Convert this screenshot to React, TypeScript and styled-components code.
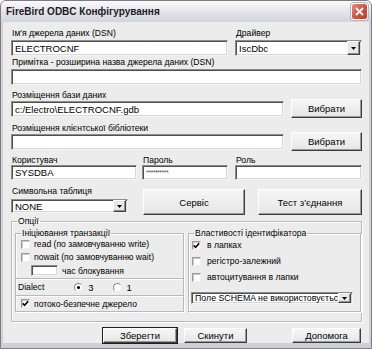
import styled, { createGlobalStyle } from "styled-components";

const GlobalStyle = createGlobalStyle`
  html, body {
    margin: 0;
    padding: 0;
    background: #ffffff;
  }
  body {
    font-family: "Liberation Sans", Arial, sans-serif;
    font-size: 8.6px;
    color: #000;
  }
  * {
    box-sizing: border-box;
  }
`;

const Window = styled.div`
  width: 372px;
  height: 349px;
  display: flex;
  flex-direction: column;
  background: #cfcfd6;
  border: 1px solid #7d7d86;
  border-radius: 6px 6px 0 0;
  padding: 0 2px 5px 2px;
  overflow: hidden;
`;

const TitleBar = styled.div`
  height: 21px;
  flex: none;
  display: flex;
  align-items: center;
  justify-content: space-between;
  margin: 0 -2px;
  padding: 0 3px 0 5px;
  background: linear-gradient(#fbfbfd, #e6e6ec 45%, #d3d3db);
`;

const Title = styled.span`
  font-family: "Liberation Sans", Arial, sans-serif;
  font-weight: bold;
  font-size: 10px;
  color: #1c1c24;
`;

const CloseButton = styled.div`
  width: 17px;
  height: 17px;
  border-radius: 3px;
  border: 1px solid #ffffff;
  background: linear-gradient(135deg, #ec8a78, #d8533f 50%, #c43a28);
  box-shadow: 0 0 0 1px #b8b8c0;
  display: flex;
  align-items: center;
  justify-content: center;
`;

const Body = styled.div`
  flex: 1;
  background: #ececec;
  padding: 6px 7px 0 8px;
  display: flex;
  flex-direction: column;
`;

const Row = styled.div<{ $gap?: number; $mt?: number; $align?: string }>`
  display: flex;
  gap: ${(p) => p.$gap ?? 7}px;
  margin-top: ${(p) => p.$mt ?? 0}px;
  align-items: ${(p) => p.$align ?? "flex-start"};
`;

const Field = styled.div<{ $w: number; $gap?: number }>`
  width: ${(p) => p.$w}px;
  display: flex;
  flex-direction: column;
  gap: ${(p) => p.$gap ?? 2}px;
`;

const Label = styled.div`
  height: 10px;
  line-height: 10px;
  white-space: nowrap;
  padding-left: 1px;
`;

const TextBox = styled.div<{ $h?: number; $w?: number; $fs?: number }>`
  height: ${(p) => p.$h ?? 16}px;
  width: ${(p) => (p.$w ? `${p.$w}px` : "100%")};
  background: #ffffff;
  border: 1px solid;
  border-color: #8c8c8c #f4f4f4 #f4f4f4 #8c8c8c;
  box-shadow: inset 1px 1px 0 #505050, inset -1px -1px 0 #d8d8d8;
  padding: 0 3px;
  display: flex;
  align-items: center;
  font-size: ${(p) => p.$fs ?? 9.5}px;
  white-space: nowrap;
  overflow: hidden;
  flex: none;
`;

const ComboText = styled.span`
  flex: 1;
  overflow: hidden;
`;

const DropButton = styled.div<{ $h: number }>`
  width: 13px;
  height: ${(p) => p.$h}px;
  margin-right: -2px;
  background: #e8e8e8;
  border: 1px solid;
  border-color: #ffffff #404040 #404040 #ffffff;
  box-shadow: inset -1px -1px 0 #909090;
  display: flex;
  align-items: center;
  justify-content: center;
  flex: none;
`;

const Button = styled.div<{ $w: number; $h: number; $default?: boolean; $ml?: number; $mt?: number }>`
  width: ${(p) => p.$w}px;
  height: ${(p) => p.$h}px;
  margin-left: ${(p) => p.$ml ?? 0}px;
  margin-top: ${(p) => p.$mt ?? 0}px;
  flex: none;
  display: flex;
  align-items: center;
  justify-content: center;
  background: linear-gradient(#f6f6f6, #e6e6e6);
  border: 1px solid;
  border-color: #ffffff #3c3c3c #3c3c3c #ffffff;
  box-shadow: inset -1px -1px 0 #9a9a9a;
  outline: ${(p) => (p.$default ? "1px solid #202020" : "none")};
  font-size: 9.5px;
  white-space: nowrap;
`;

const Group = styled.fieldset<{ $w?: number }>`
  margin: 0;
  padding: 0;
  min-inline-size: 0;
  border: 1px solid #b9b9b9;
  box-shadow: 1px 1px 0 #ffffff, inset 1px 1px 0 #ffffff;
  ${(p) => (p.$w ? `width: ${p.$w}px; flex: none;` : "flex: 1;")}
`;

const Legend = styled.legend<{ $ml?: number }>`
  padding: 0 1px;
  margin-left: ${(p) => p.$ml ?? 3}px;
  line-height: 8px;
  height: 8px;
  white-space: nowrap;
`;

const OptionsGroup = styled(Group)`
  margin-top: 2px;
  padding: 0 0 4px 3px;
`;

const GroupsRow = styled.div`
  display: flex;
  gap: 4px;
  margin-top: 4px;
`;

const IdentGroup = styled(Group)`
  padding: 0 0 0 3px;
`;

const Section = styled.div<{ $h: number; $pl?: number; $line?: boolean }>`
  height: ${(p) => p.$h}px;
  padding-left: ${(p) => p.$pl ?? 5}px;
  border-bottom: ${(p) => (p.$line ? "1px solid #b9b9b9" : "none")};
  box-shadow: ${(p) => (p.$line ? "0 1px 0 #ffffff" : "none")};
  display: flex;
  flex-direction: column;
  justify-content: center;
`;

const CheckRow = styled.div<{ $h: number; $gap: number }>`
  height: ${(p) => p.$h}px;
  display: flex;
  align-items: center;
  gap: ${(p) => p.$gap}px;
  white-space: nowrap;
`;

const Box = styled.span`
  width: 9px;
  height: 9px;
  flex: none;
  background: #ffffff;
  border: 1px solid;
  border-color: #9a9a9a #f0f0f0 #f0f0f0 #9a9a9a;
  box-shadow: inset 1px 1px 0 #c8c8c8;
  display: flex;
  align-items: center;
  justify-content: center;
`;

const RadioCircle = styled.span`
  width: 9px;
  height: 9px;
  flex: none;
  border-radius: 50%;
  background: #ffffff;
  border: 1px solid;
  border-color: #8a8a8a #e8e8e8 #e8e8e8 #8a8a8a;
  display: flex;
  align-items: center;
  justify-content: center;
`;

const RadioDot = styled.span`
  width: 3px;
  height: 3px;
  border-radius: 50%;
  background: #000;
`;

const Radio = styled.div<{ $ml: number }>`
  display: flex;
  align-items: center;
  gap: 5px;
  margin-left: ${(p) => p.$ml}px;
  font-size: 9.5px;
`;

const DialectRow = styled.div`
  display: flex;
  align-items: center;
`;

const TimeoutRow = styled.div`
  height: 14px;
  display: flex;
  align-items: center;
  gap: 4px;
  padding-left: 10px;
`;

const SchemaCombo = styled.div`
  margin-top: 7px;
  margin-left: -1px;
`;

const Footer = styled.div`
  display: flex;
  margin-top: 6px;
  padding-left: 92px;
`;

const Check = ({ on }: { on?: boolean }) => (
  <Box>
    {on && (
      <svg width="7" height="7" viewBox="0 0 7 7">
        <path d="M0.8 3.4 L2.6 5.3 L6.2 1.2" stroke="#000" strokeWidth="1.6" fill="none" />
      </svg>
    )}
  </Box>
);

const Arrow = () => (
  <svg width="5" height="3" viewBox="0 0 5 3">
    <path d="M0 0 H5 L2.5 3 Z" fill="#000" />
  </svg>
);

const Combo = ({ text, h, w, fs }: { text: string; h: number; w?: number; fs?: number }) => (
  <TextBox $h={h} $w={w} $fs={fs}>
    <ComboText>{text}</ComboText>
    <DropButton $h={h - 2}>
      <Arrow />
    </DropButton>
  </TextBox>
);

export default function App() {
  return (
    <>
      <GlobalStyle />
      <Window>
        <TitleBar>
          <Title>FireBird ODBC Конфігурування</Title>
          <CloseButton>
            <svg width="9" height="9" viewBox="0 0 9 9">
              <path d="M1 1 L8 8 M8 1 L1 8" stroke="#fff" strokeWidth="1.8" />
            </svg>
          </CloseButton>
        </TitleBar>
        <Body>
          <Row>
            <Field $w={217}>
              <Label>Ім'я джерела даних (DSN)</Label>
              <TextBox>ELECTROCNF</TextBox>
            </Field>
            <Field $w={127}>
              <Label>Драйвер</Label>
              <Combo text="IscDbc" h={16} />
            </Field>
          </Row>

          <Row $mt={1}>
            <Field $w={351}>
              <Label>Примітка - розширина назва джерела даних (DSN)</Label>
              <TextBox />
            </Field>
          </Row>

          <Row $mt={5} $align="flex-end">
            <Field $w={273} $gap={1}>
              <Label>Розміщення бази даних</Label>
              <TextBox>c:/Electro\ELECTROCNF.gdb</TextBox>
            </Field>
            <Button $w={71} $h={19} style={{ marginBottom: -1 }}>
              Вибрати
            </Button>
          </Row>

          <Row $mt={6} $align="flex-end">
            <Field $w={273} $gap={1}>
              <Label>Розміщення клієнтської бібліотеки</Label>
              <TextBox />
            </Field>
            <Button $w={71} $h={19} style={{ marginBottom: -1 }}>
              Вибрати
            </Button>
          </Row>

          <Row $mt={5}>
            <Field $w={126} $gap={0}>
              <Label>Користувач</Label>
              <TextBox $h={15}>SYSDBA</TextBox>
            </Field>
            <Field $w={86} $gap={0} style={{ marginLeft: -2 }}>
              <Label>Пароль</Label>
              <TextBox $h={15} $fs={7} style={{ letterSpacing: -0.5, color: "#555" }}>
                **********
              </TextBox>
            </Field>
            <Field $w={127} $gap={0}>
              <Label>Роль</Label>
              <TextBox $h={15} />
            </Field>
          </Row>

          <Row $mt={6} $gap={15}>
            <Field $w={117} $gap={3}>
              <Label>Символьна таблиця</Label>
              <Combo text="NONE" h={14} />
            </Field>
            <Button $w={102} $h={26} $mt={3}>
              Сервіс
            </Button>
            <Button $w={104} $h={26} $ml={-2} $mt={3}>
              Тест з'єднання
            </Button>
          </Row>

          <OptionsGroup>
            <Legend $ml={2}>Опції</Legend>
            <GroupsRow>
              <Group $w={169}>
                <Legend $ml={5}>Ініціювання транзакції</Legend>
                <Section $h={42} $line>
                  <CheckRow $h={13} $gap={4}>
                    <Check />
                    read (по замовчуванню write)
                  </CheckRow>
                  <CheckRow $h={13} $gap={4}>
                    <Check />
                    nowait (по замовчуванню wait)
                  </CheckRow>
                  <TimeoutRow>
                    <TextBox $w={27} $h={11} />
                    час блокування
                  </TimeoutRow>
                </Section>
                <Section $h={17} $pl={2} $line>
                  <DialectRow>
                    Dialect
                    <Radio $ml={30}>
                      <RadioCircle>
                        <RadioDot />
                      </RadioCircle>
                      3
                    </Radio>
                    <Radio $ml={19}>
                      <RadioCircle />1
                    </Radio>
                  </DialectRow>
                </Section>
                <Section $h={15}>
                  <CheckRow $h={13} $gap={4}>
                    <Check on />
                    потоко-безпечне джерело
                  </CheckRow>
                </Section>
              </Group>

              <IdentGroup>
                <Legend $ml={2}>Властивості ідентифікатора</Legend>
                <CheckRow $h={16} $gap={6}>
                  <Check on />
                  в лапках
                </CheckRow>
                <CheckRow $h={16} $gap={6}>
                  <Check />
                  регістро-залежний
                </CheckRow>
                <CheckRow $h={16} $gap={6}>
                  <Check />
                  автоцитування в лапки
                </CheckRow>
                <SchemaCombo>
                  <Combo text="Поле SCHEMA не використовуєтьс" h={12} w={162} fs={8.8} />
                </SchemaCombo>
              </IdentGroup>
            </GroupsRow>
          </OptionsGroup>

          <Footer>
            <Button $w={74} $h={15} $default>
              Зберегти
            </Button>
            <Button $w={63} $h={15} $ml={7}>
              Скинути
            </Button>
            <Button $w={69} $h={15} $ml={45}>
              Допомога
            </Button>
          </Footer>
        </Body>
      </Window>
    </>
  );
}
